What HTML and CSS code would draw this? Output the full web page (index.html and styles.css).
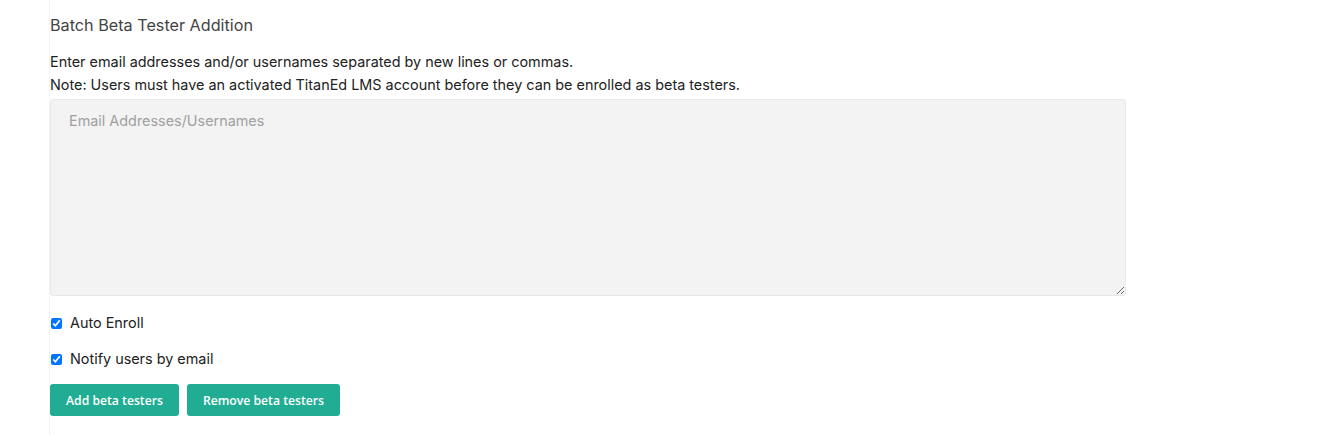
FILE: index.html
```html
<!DOCTYPE html>
<html>
<head>
<meta charset="utf-8">
<link rel="stylesheet" href="styles.css">
</head>
<body>
<div class="page">
  <section class="panel">
    <h2 class="title">Batch Beta Tester Addition</h2>
    <p class="help">Enter email addresses and/or usernames separated by new lines or commas.<br>Note: Users must have an activated TitanEd LMS account before they can be enrolled as beta testers.</p>
    <textarea class="input" placeholder="Email Addresses/Usernames"></textarea>
    <label class="check"><input type="checkbox" checked> <span>Auto Enroll</span></label>
    <label class="check"><input type="checkbox" checked> <span>Notify users by email</span></label>
    <div class="actions">
      <button class="btn">Add beta testers</button>
      <button class="btn">Remove beta testers</button>
    </div>
  </section>
</div>
</body>
</html>
```
FILE: styles.css
```css
html, body {
  margin: 0;
  padding: 0;
  background: #fff;
}
body {
  font-family: Inter, "Liberation Sans", sans-serif;
  color: #222;
}
.page {
  padding-left: 49px;
  height: 435px;
}
.panel {
  border-left: 1px solid #f4f4f4;
  height: 100%;
  width: 1077px;
  padding-top: 14px;
  box-sizing: border-box;
}
.title {
  margin: 0;
  font-size: 16.2px;
  font-weight: 400;
  color: #444;
  line-height: 22px;
}
.help {
  margin: 14px 0 0;
  font-size: 14.4px;
  line-height: 23px;
  color: #222;
}
.input {
  display: block;
  margin-top: 3px;
  width: 1076px;
  height: 197px;
  box-sizing: border-box;
  background: #f3f3f3;
  border: 1px solid #e8e8e8;
  border-radius: 3px;
  padding: 12px 18px;
  font-family: Inter, "Liberation Sans", sans-serif;
  font-size: 14.4px;
  color: #222;
  resize: vertical;
}
.input::placeholder {
  color: #a0a0a0;
}
.check {
  display: flex;
  align-items: center;
  gap: 8px;
  font-size: 14.4px;
  line-height: 20px;
  margin-top: 17px;
}
.check + .check {
  margin-top: 16px;
}
.check input {
  margin: 0 0 0 1px;
  width: 11px;
  height: 11px;
}
.actions {
  display: flex;
  gap: 8px;
  margin-top: 15px;
}
.btn {
  background: #21ad93;
  color: #fff;
  border: none;
  border-radius: 3px;
  height: 32px;
  padding: 0 16px;
  font-family: "Open Sans", "Liberation Sans", sans-serif;
  font-weight: 600;
  font-size: 12.2px;
}
```
